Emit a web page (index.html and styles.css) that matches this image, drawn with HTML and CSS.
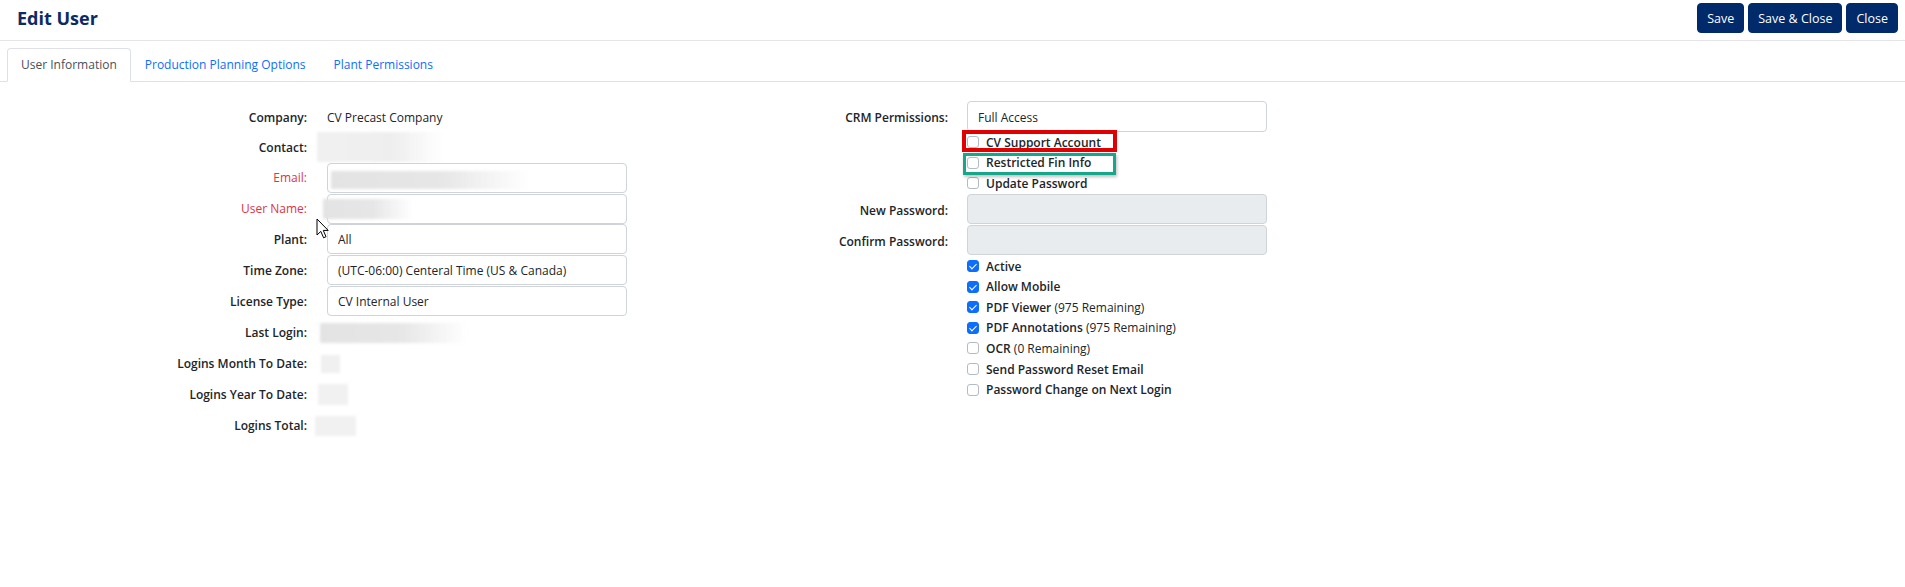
FILE: index.html
```html
<!DOCTYPE html>
<html lang="en">
<head>
    <meta charset="UTF-8">
    <meta name="viewport" content="width=device-width, initial-scale=1.0">
    <title>Edit User</title>
    <link rel="stylesheet" href="styles.css">
</head>
<body>
    <header class="topbar">
        <h1 class="page-title">Edit User</h1>
        <div class="actions">
            <button class="btn">Save</button>
            <button class="btn">Save &amp; Close</button>
            <button class="btn">Close</button>
        </div>
    </header>

    <ul class="tabs">
        <li class="tab active">User Information</li>
        <li class="tab">Production Planning Options</li>
        <li class="tab">Plant Permissions</li>
    </ul>

    <div class="form-body">
        <div class="col-left">
            <div class="row short">
                <label>Company:</label>
                <span class="value">CV Precast Company</span>
            </div>
            <div class="row short">
                <label>Contact:</label>
                <span class="blur blur-contact"></span>
            </div>
            <div class="row">
                <label class="req">Email:</label>
                <div class="field">
                    <input class="form-control" type="text">
                    <span class="blur blur-email"></span>
                </div>
            </div>
            <div class="row">
                <label class="req">User Name:</label>
                <div class="field">
                    <input class="form-control" type="text">
                    <span class="blur blur-user"></span>
                </div>
            </div>
            <div class="row">
                <label>Plant:</label>
                <input class="form-control" type="text" value="All">
            </div>
            <div class="row">
                <label>Time Zone:</label>
                <input class="form-control" type="text" value="(UTC-06:00) Centeral Time (US &amp; Canada)">
            </div>
            <div class="row">
                <label>License Type:</label>
                <input class="form-control" type="text" value="CV Internal User">
            </div>
            <div class="row">
                <label>Last Login:</label>
                <span class="blur blur-last"></span>
            </div>
            <div class="row">
                <label>Logins Month To Date:</label>
                <span class="blur blur-month"></span>
            </div>
            <div class="row">
                <label>Logins Year To Date:</label>
                <span class="blur blur-year"></span>
            </div>
            <div class="row">
                <label>Logins Total:</label>
                <span class="blur blur-total"></span>
            </div>
        </div>

        <div class="col-right">
            <div class="row">
                <label>CRM Permissions:</label>
                <input class="form-control" type="text" value="Full Access">
            </div>
            <div class="check-list">
                <label class="check"><input type="checkbox"><span><b>CV Support Account</b></span></label>
                <label class="check"><input type="checkbox"><span><b>Restricted Fin Info</b></span></label>
                <label class="check"><input type="checkbox"><span><b>Update Password</b></span></label>
            </div>
            <div class="row">
                <label>New Password:</label>
                <input class="form-control" type="password" disabled>
            </div>
            <div class="row">
                <label>Confirm Password:</label>
                <input class="form-control" type="password" disabled>
            </div>
            <div class="check-list">
                <label class="check"><input type="checkbox" checked><span><b>Active</b></span></label>
                <label class="check"><input type="checkbox" checked><span><b>Allow Mobile</b></span></label>
                <label class="check"><input type="checkbox" checked><span><b>PDF Viewer</b> (975 Remaining)</span></label>
                <label class="check"><input type="checkbox" checked><span><b>PDF Annotations</b> (975 Remaining)</span></label>
                <label class="check"><input type="checkbox"><span><b>OCR</b> (0 Remaining)</span></label>
                <label class="check"><input type="checkbox"><span><b>Send Password Reset Email</b></span></label>
                <label class="check"><input type="checkbox"><span><b>Password Change on Next Login</b></span></label>
            </div>
        </div>
    </div>

    <!-- highlight boxes and mouse pointer from the screenshot -->
    <div class="mark mark-red"></div>
    <div class="mark mark-green"></div>
    <svg class="cursor" width="13" height="21" viewBox="0 0 13 21">
        <path d="M1 1 L1 17 L4.8 13.4 L7.6 19.8 L10 18.7 L7.3 12.4 L12.2 12.4 Z" fill="#fff" stroke="#000" stroke-width="1" stroke-linejoin="round"/>
    </svg>
</body>
</html>
```

FILE: styles.css
```css
body {
    margin: 0;
    font-family: "Open Sans", "Noto Sans", sans-serif;
    font-size: 12px;
    color: #212529;
    background: #fff;
}
.topbar {
    display: flex;
    justify-content: space-between;
    align-items: flex-start;
    height: 41px;
    padding: 3px 7px 0 17px;
    box-sizing: border-box;
    border-bottom: 1px solid #e3e5e8;
}
.page-title {
    margin: 0;
    font-size: 18px;
    font-weight: 700;
    line-height: 30px;
    color: #0b2a66;
}
.actions {
    display: flex;
    gap: 4px;
}
.btn {
    height: 30px;
    padding: 0 9px;
    font: inherit;
    font-size: 12.5px;
    color: #fff;
    background: #012a6b;
    border: 1px solid #012a6b;
    border-radius: 4px;
    cursor: pointer;
}
.tabs {
    display: flex;
    list-style: none;
    margin: 7px 0 0;
    padding: 0 0 0 7px;
    border-bottom: 1px solid #dee2e6;
}
.tab {
    height: 32px;
    line-height: 32px;
    padding: 0 13px;
    margin-bottom: -1px;
    color: #0d6efd;
    border: 1px solid transparent;
    border-radius: 4px 4px 0 0;
    cursor: pointer;
}
.tab.active {
    color: #495057;
    background: #fff;
    border-color: #dee2e6 #dee2e6 #fff;
}
.form-body {
    display: flex;
    padding: 19px 0 0 7px;
}
.col-left {
    width: 641px;
    padding-top: 1px;
}
.row {
    display: grid;
    grid-template-columns: 300px 300px;
    column-gap: 20px;
    align-items: center;
    height: 31px;
}
.row.short {
    height: 30px;
}
.col-right .row {
    column-gap: 19px;
}
.row > label {
    text-align: right;
    font-weight: 600;
}
.col-right .row > label {
    padding-top: 2px;
}
.row > label.req {
    color: #dc3545;
    font-weight: 400;
}
.field {
    position: relative;
}
.form-control {
    display: block;
    width: 100%;
    height: 30px;
    box-sizing: border-box;
    padding: 0 10px;
    font: inherit;
    color: #212529;
    background: #fff;
    border: 1px solid #ced4da;
    border-radius: 4px;
}
.row .form-control {
    align-self: start;
}
.col-right .row:first-child .form-control {
    height: 31px;
    padding-top: 2px;
}
.form-control:disabled {
    background: #e9ecef;
}
.check-list {
    padding-left: 319px;
}
.check {
    display: flex;
    align-items: center;
    gap: 7px;
    height: 20.6px;
}
.check b {
    font-weight: 600;
}
.check input {
    appearance: none;
    position: relative;
    width: 12px;
    height: 12px;
    margin: 0;
    background: #fff;
    border: 1px solid #b4bbc2;
    border-radius: 3px;
}
.check input:checked {
    background: #0d6efd;
    border-color: #0d6efd;
}
.check input:checked::after {
    content: "";
    position: absolute;
    left: 3px;
    top: 1px;
    width: 3px;
    height: 6px;
    border: solid #fff;
    border-width: 0 1.6px 1.6px 0;
    transform: rotate(45deg);
}
/* redacted values */
.blur {
    display: block;
    background: linear-gradient(90deg, #e3e3e3 0%, #e6e6e6 55%, rgba(245, 245, 245, 0) 100%);
    filter: blur(1.5px);
}
.blur-contact {
    width: 126px;
    height: 30px;
    margin-left: -10px;
    background: linear-gradient(90deg, #f0f0f0 0%, #eeeeee 60%, rgba(248, 248, 248, 0) 100%);
}
.blur-email {
    position: absolute;
    left: 4px;
    top: 8px;
    width: 199px;
    height: 18px;
}
.blur-user {
    position: absolute;
    left: -4px;
    top: 5px;
    width: 90px;
    height: 20px;
}
.blur-last {
    width: 147px;
    height: 20px;
    margin-left: -7px;
}
.blur-month {
    width: 19px;
    height: 18px;
    margin-left: -6px;
    background: #f0f0f0;
}
.blur-year {
    width: 30px;
    height: 21px;
    margin-left: -9px;
    background: #f1f1f1;
}
.blur-total {
    width: 41px;
    height: 20px;
    margin-left: -12px;
    background: #f1f1f1;
}
.mark {
    position: absolute;
    box-sizing: border-box;
}
.mark-red {
    left: 962px;
    top: 130px;
    width: 155px;
    height: 22px;
    border: 4px solid #e00000;
}
.mark-green {
    left: 963px;
    top: 153px;
    width: 153px;
    height: 22px;
    border: 3px solid #17a689;
    box-shadow: 1px 2px 3px rgba(0, 0, 0, 0.25);
}
.cursor {
    position: absolute;
    left: 316px;
    top: 218px;
}
```
